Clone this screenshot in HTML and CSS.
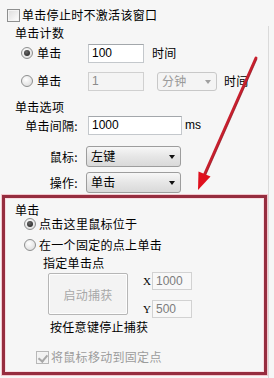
FILE: index.html
```html
<!DOCTYPE html>
<html lang="zh">
<head>
<meta charset="utf-8">
<link rel="stylesheet" href="styles.css">
</head>
<body>
<div class="page">
  <div class="top-row">
    <span class="check"></span>
    <span class="txt">单击停止时不激活该窗口</span>
  </div>
  <div class="main">
    <div class="group-title t-count">单击计数</div>
    <div class="count-row r1">
      <div class="choice"><span class="radio on"></span><span class="txt">单击</span></div>
      <div class="input num w56">100</div>
      <span class="txt after1">时间</span>
    </div>
    <div class="count-row r2">
      <div class="choice"><span class="radio"></span><span class="txt">单击</span></div>
      <div class="input num w56 dis">1</div>
      <div class="select dis s60"><span class="txt">分钟</span><span class="arrow"></span></div>
      <span class="txt after2">时间</span>
    </div>
    <div class="group-title t-opt">单击选项</div>
    <div class="opt-row o1">
      <span class="lbl">单击间隔:</span>
      <div class="input num w94">1000</div>
      <span class="unit">ms</span>
    </div>
    <div class="opt-row o2">
      <span class="lbl">鼠标:</span>
      <div class="select s95"><span class="txt">左键</span><span class="arrow"></span></div>
    </div>
    <div class="opt-row o3">
      <span class="lbl">操作:</span>
      <div class="select s95"><span class="txt">单击</span><span class="arrow"></span></div>
    </div>

    <section class="redbox">
      <div class="group-title rb-title">单击</div>
      <div class="rb-radio q1"><span class="radio on"></span><span class="txt">点击这里鼠标位于</span></div>
      <div class="rb-radio q2"><span class="radio"></span><span class="txt">在一个固定的点上单击</span></div>
      <div class="sub-title">指定单击点</div>
      <div class="capture">
        <div class="btn-dis">启动捕获</div>
        <div class="coords">
          <div class="coord"><span class="axis">X</span><div class="input num w40 grey">1000</div></div>
          <div class="coord"><span class="axis">Y</span><div class="input num w40 grey">500</div></div>
        </div>
      </div>
      <div class="hint">按任意键停止捕获</div>
      <div class="move-row"><span class="check checked dis"></span><span class="txt greytxt">将鼠标移动到固定点</span></div>
    </section>
  </div>

  <svg class="arrow-mark" width="274" height="378" viewBox="0 0 274 378">
    <line x1="256" y1="50" x2="203" y2="170" stroke="#c8202e" stroke-width="3" stroke-linecap="round"/>
    <line x1="257" y1="51" x2="204" y2="171" stroke="#7a1420" stroke-width="1" opacity="0.5"/>
    <polygon points="198,182 210.5,168.5 198.5,163.5" fill="#e0101e"/>
  </svg>
</div>
</body>
</html>
```

FILE: styles.css
```css
* { box-sizing: border-box; }
html, body { margin: 0; padding: 0; }
body {
  width: 274px;
  height: 378px;
  overflow: hidden;
  background: #f6f6f6;
  font-family: "Noto Sans CJK SC", "Liberation Sans", sans-serif;
  font-size: 12px;
  color: #000;
}
.page {
  position: relative;
  width: 274px;
  height: 378px;
}
.txt { line-height: 14px; white-space: nowrap; letter-spacing: 0.3px; }

.top-row {
  display: flex;
  align-items: center;
  height: 14px;
  margin-top: 8px;
  padding-left: 7px;
  gap: 2px;
}
.check {
  width: 13px;
  height: 13px;
  border: 1px solid #8e8f8f;
  background: linear-gradient(135deg, #dcdcdc, #ffffff);
  box-shadow: inset 0 0 0 1px #f4f4f4;
  flex: none;
  position: relative;
}
.check.checked.dis {
  border-color: #b8b8b8;
  background: #f2f2f2;
}
.check.checked::after {
  content: "";
  position: absolute;
  left: 3px;
  top: 1px;
  width: 4px;
  height: 7px;
  border-right: 2px solid #a8a8a8;
  border-bottom: 2px solid #a8a8a8;
  transform: rotate(40deg);
}

.main {
  margin-top: 4px;
  width: 269px;
  border-right: 1px solid #dadada;
  padding-bottom: 6px;
}
.group-title {
  height: 14px;
  line-height: 14px;
  padding-left: 15px;
  letter-spacing: 0.3px;
}
.t-count { padding-left: 15px; }

.count-row {
  display: flex;
  align-items: center;
  height: 20px;
  padding-left: 21px;
}
.r1 { margin-top: 3px; }
.r2 { margin-top: 8px; }
.choice {
  display: flex;
  align-items: center;
  gap: 4px;
  width: 67px;
}
.radio {
  width: 12px;
  height: 12px;
  border-radius: 50%;
  border: 1px solid #8e8f8f;
  background: radial-gradient(circle at 40% 35%, #ffffff, #d6d6d6);
  flex: none;
  position: relative;
}
.radio.on::after {
  content: "";
  position: absolute;
  left: 2px;
  top: 2px;
  width: 6px;
  height: 6px;
  border-radius: 50%;
  background: radial-gradient(circle at 40% 35%, #6a6a6a, #1a1a1a);
}
.input {
  height: 19px;
  background: #fff;
  border: 1px solid #c4c8cc;
  border-top-color: #a3a7ab;
  line-height: 17px;
  padding-left: 3px;
}
.num {
  font-family: "Liberation Sans", "DejaVu Sans", sans-serif;
  font-size: 12px;
}
.w56 { width: 56px; }
.w94 { width: 94px; margin-left: 2px; }
.w40 { width: 40px; height: 18px; line-height: 16px; }
.input.dis {
  background: #f4f4f4;
  border-color: #d0d0d0;
  color: #8a8a8a;
}
.input.grey { color: #7c7c7c; border-color: #d2d2d2; background: #f8f8f8; }
.after1 { margin-left: 8px; }
.after2 { margin-left: 7px; }

.select {
  position: relative;
  height: 21px;
  border: 1px solid #9d9d9d;
  border-radius: 3px;
  background: linear-gradient(#f7f7f7, #e6e6e6 50%, #d9d9d9);
  display: flex;
  align-items: center;
  padding-left: 4px;
}
.select .arrow {
  position: absolute;
  right: 5px;
  top: 8px;
  width: 0;
  height: 0;
  border-left: 3.5px solid transparent;
  border-right: 3.5px solid transparent;
  border-top: 4px solid #111;
}
.select.dis {
  border-color: #c8c8c8;
  background: #f4f4f4;
  color: #9a9a9a;
  height: 19px;
}
.select.dis .arrow { border-top-color: #a0a0a0; top: 7px; }
.s60 { width: 60px; margin-left: 13px; }
.s95 { width: 95px; }

.t-opt { margin-top: 9px; }
.opt-row {
  display: flex;
  align-items: center;
  height: 20px;
}
.o1 { margin-top: 1px; }
.o2 { margin-top: 11px; }
.o3 { margin-top: 6px; }
.lbl {
  width: 86px;
  text-align: right;
  padding-right: 8px;
  white-space: nowrap;
  letter-spacing: 0.3px;
}
.unit {
  margin-left: 3px;
  font-family: "Liberation Sans", sans-serif;
  font-size: 12px;
}

.redbox {
  margin: 3px 0 0 2px;
  width: 265px;
  height: 180px;
  border: 3px solid #962d3f;
  box-shadow: 0 0 0 1px #f3c8ce, inset 0 0 0 1px #f7dde1;
  padding-top: 5px;
}
.rb-title { padding-left: 10px; }
.rb-radio {
  display: flex;
  align-items: center;
  gap: 3px;
  height: 14px;
  padding-left: 19px;
}
.q2 { margin-top: 7px; }
.sub-title {
  margin-top: 4px;
  height: 14px;
  line-height: 14px;
  padding-left: 38px;
  letter-spacing: 0.3px;
}
.capture {
  display: flex;
  margin-top: 2px;
  padding-left: 43px;
}
.btn-dis {
  width: 80px;
  height: 42px;
  margin-top: 1px;
  border: 1px solid #b6b6b6;
  border-radius: 2px;
  background: #f3f3f3;
  box-shadow: inset 0 0 0 1px #fdfdfd;
  color: #a8a8a8;
  display: flex;
  align-items: center;
  justify-content: center;
  letter-spacing: 0.3px;
}
.coords {
  display: flex;
  flex-direction: column;
  gap: 10px;
  margin-left: 15px;
}
.coord {
  display: flex;
  align-items: center;
  gap: 2px;
}
.axis {
  width: 7px;
  font-family: "Liberation Serif", serif;
  font-size: 11px;
  line-height: 14px;
}
.hint {
  margin-top: 2px;
  height: 14px;
  line-height: 14px;
  padding-left: 45px;
  letter-spacing: 0.3px;
}
.move-row {
  display: flex;
  align-items: center;
  gap: 2px;
  margin-top: 16px;
  height: 14px;
  padding-left: 31px;
}
.greytxt { color: #9c9c9c; }

.arrow-mark {
  position: absolute;
  left: 0;
  top: 0;
  pointer-events: none;
}
```
